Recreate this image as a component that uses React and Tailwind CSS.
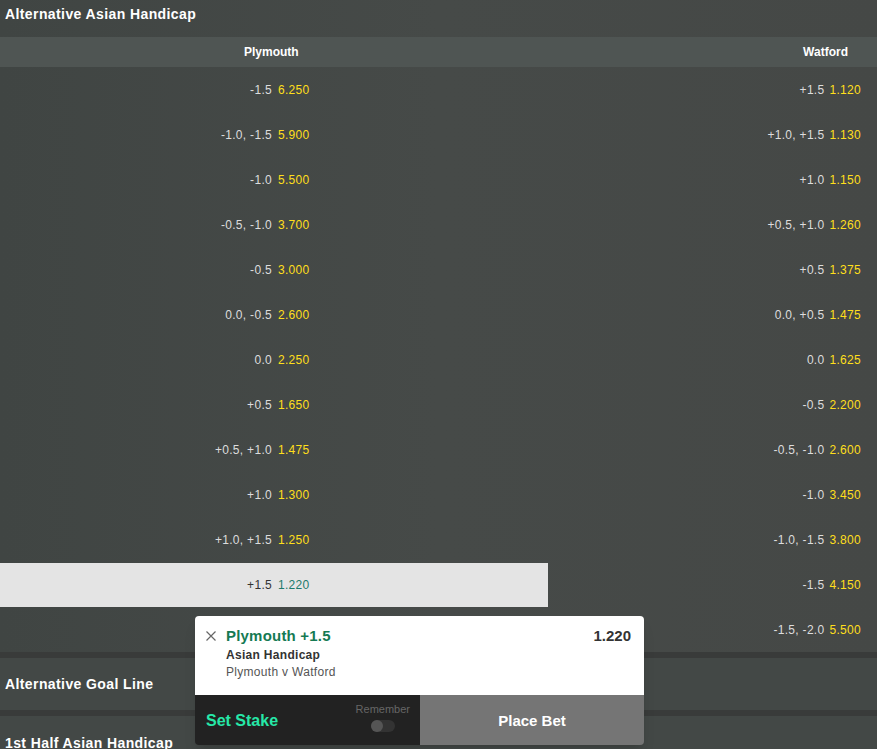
import React from "react";

const rows = [
  ["-1.5", "6.250", "+1.5", "1.120"],
  ["-1.0, -1.5", "5.900", "+1.0, +1.5", "1.130"],
  ["-1.0", "5.500", "+1.0", "1.150"],
  ["-0.5, -1.0", "3.700", "+0.5, +1.0", "1.260"],
  ["-0.5", "3.000", "+0.5", "1.375"],
  ["0.0, -0.5", "2.600", "0.0, +0.5", "1.475"],
  ["0.0", "2.250", "0.0", "1.625"],
  ["+0.5", "1.650", "-0.5", "2.200"],
  ["+0.5, +1.0", "1.475", "-0.5, -1.0", "2.600"],
  ["+1.0", "1.300", "-1.0", "3.450"],
  ["+1.0, +1.5", "1.250", "-1.0, -1.5", "3.800"],
  ["+1.5", "1.220", "-1.5", "4.150"],
  [null, null, "-1.5, -2.0", "5.500"],
];

const Row = ({ row, index }) => {
  const selected = index === 11;
  return (
    <div className="flex h-[45px] items-center pt-[1px] text-[12px] tracking-[0.3px]">
      <div
        className={`flex h-full w-[548px] items-center ${
          selected ? "bg-[#e4e4e4]" : ""
        }`}
      >
        {row[0] && (
          <>
            <span
              className={`w-[272px] text-right ${
                selected ? "text-[#333]" : "text-[#ddd]"
              }`}
            >
              {row[0]}
            </span>
            <span
              className={`ml-[6px] ${
                selected ? "text-[#1c7a6c]" : "text-[#ffdf1b]"
              }`}
            >
              {row[1]}
            </span>
          </>
        )}
      </div>
      <div className="flex flex-1 items-center justify-end gap-[5px] pr-[16px]">
        <span className="text-[#ddd]">{row[2]}</span>
        <span className="text-[#ffdf1b]">{row[3]}</span>
      </div>
    </div>
  );
};

const BetSlip = () => (
  <div className="absolute left-[195px] top-[616px] w-[449px] overflow-hidden rounded-[4px] shadow-lg">
    <div className="flex h-[79px] bg-white pl-[11px] pr-[13px] pt-[12px]">
      <div className="w-[20px] pt-[3px]">
        <svg width="10" height="10" viewBox="0 0 10 10">
          <path d="M0.5 0.5 L9.5 9.5 M9.5 0.5 L0.5 9.5" stroke="#666" strokeWidth="1.2" />
        </svg>
      </div>
      <div className="flex-1">
        <div className="text-[15px] font-bold leading-[16px] tracking-[0.2px] text-[#157a53]">
          Plymouth +1.5
        </div>
        <div className="mt-[4px] text-[12px] font-bold leading-[14px] tracking-[0.3px] text-[#333]">
          Asian Handicap
        </div>
        <div className="mt-[3px] text-[12px] leading-[14px] tracking-[0.3px] text-[#555]">
          Plymouth v Watford
        </div>
      </div>
      <span className="text-[15px] font-bold leading-[16px] text-[#333]">1.220</span>
    </div>
    <div className="flex h-[50px]">
      <div className="flex w-[225px] items-center justify-between bg-[#222] pl-[11px] pr-[10px]">
        <span className="pt-[2px] text-[16px] font-bold text-[#26e8a8]">Set Stake</span>
        <div className="flex flex-col items-center self-start pt-[7px]">
          <span className="text-[11px] leading-[14px] text-[#666]">Remember</span>
          <div className="mt-[4px] flex h-[12px] w-[24px] items-center rounded-full bg-[#333]">
            <div className="h-[12px] w-[12px] rounded-full bg-[#555]" />
          </div>
        </div>
      </div>
      <div className="flex flex-1 items-center justify-center bg-[#757575] pt-[2px] text-[15px] font-bold text-white">
        Place Bet
      </div>
    </div>
  </div>
);

export default function App() {
  return (
    <div
      className="relative h-[749px] w-[877px] overflow-hidden bg-[#434846] text-white"
      style={{ fontFamily: '"Liberation Sans", Arial, sans-serif' }}
    >
      <div className="bg-gradient-to-r from-[#404543] via-[#464a48] to-[#454846]">
        <div className="flex h-[37px] items-start pl-[5px] pt-[4px] text-[14px] font-bold tracking-[0.4px]">
          Alternative Asian Handicap
        </div>
        <div className="flex h-[30px] items-center bg-[#4f5553] text-[12px] font-bold">
          <div className="w-[548px] pl-[244px]">Plymouth</div>
          <div className="flex flex-1 justify-end pr-[29px]">Watford</div>
        </div>
        {rows.map((row, i) => (
          <Row key={i} row={row} index={i} />
        ))}
      </div>
      <div className="h-[6px] bg-[#393b3a]" />
      <div className="flex h-[52px] items-center pl-[5px] text-[14px] font-bold tracking-[0.4px]">
        Alternative Goal Line
      </div>
      <div className="h-[6px] bg-[#393b3a]" />
      <div className="flex h-[40px] items-start pl-[5px] pt-[17px] text-[14px] font-bold tracking-[0.4px]">
        1st Half Asian Handicap
      </div>
      <BetSlip />
    </div>
  );
}
